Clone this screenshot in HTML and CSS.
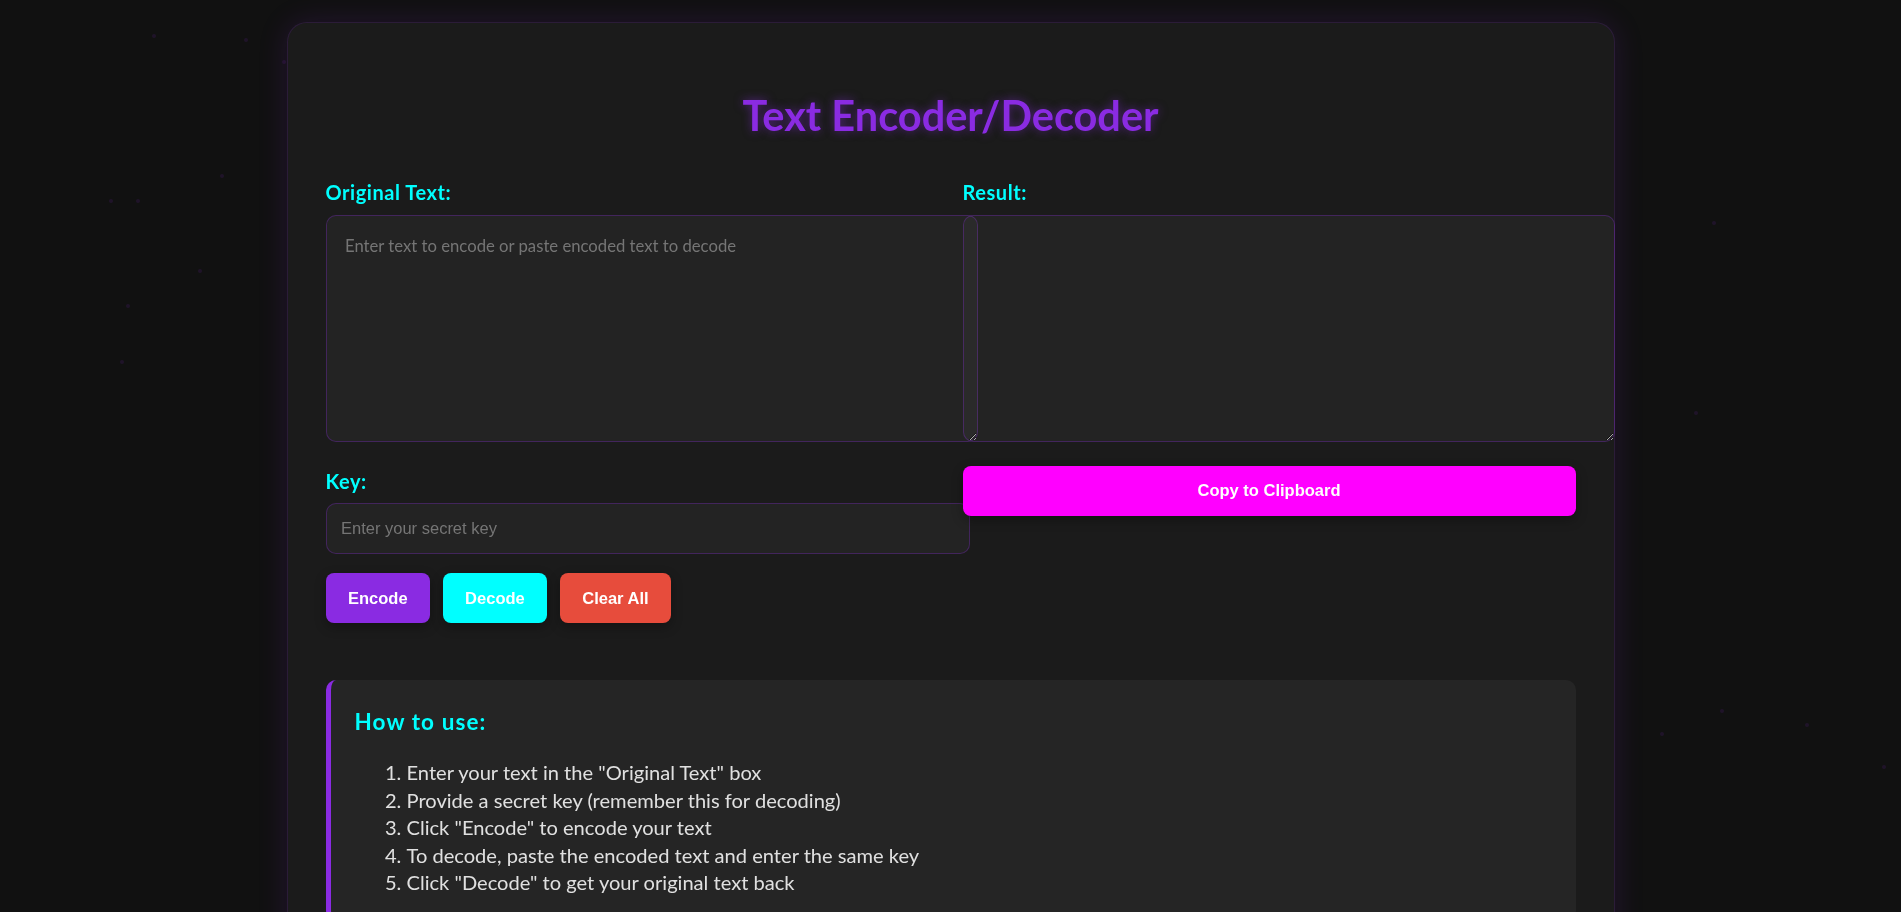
FILE: index.html
```html
<!DOCTYPE html>
<html lang="en">
<head>
    <meta charset="UTF-8">
    <meta name="viewport" content="width=device-width, initial-scale=1.0">
    <title>Text Encoder/Decoder</title>
    <link rel="stylesheet" href="styles.css">
</head>
<body>
    <div class="particles">
        <span></span><span></span><span></span><span></span><span></span>
        <span></span><span></span><span></span><span></span><span></span>
        <span></span><span></span><span></span><span></span><span></span>
    </div>

    <div class="container">
        <h1>Text Encoder/Decoder</h1>

        <div class="grid">
            <div class="col">
                <div class="group">
                    <label for="inputText">Original Text:</label>
                    <textarea id="inputText" placeholder="Enter text to encode or paste encoded text to decode"></textarea>
                </div>
                <div class="group key-group">
                    <label for="key">Key:</label>
                    <input type="text" id="key" placeholder="Enter your secret key">
                </div>
                <div class="buttons">
                    <button class="btn-encode">Encode</button>
                    <button class="btn-decode">Decode</button>
                    <button class="btn-clear">Clear All</button>
                </div>
            </div>
            <div class="col">
                <div class="group">
                    <label for="outputText">Result:</label>
                    <textarea id="outputText" readonly></textarea>
                </div>
                <button class="btn-copy">Copy to Clipboard</button>
            </div>
        </div>

        <div class="instructions">
            <h3>How to use:</h3>
            <ol>
                <li>Enter your text in the "Original Text" box</li>
                <li>Provide a secret key (remember this for decoding)</li>
                <li>Click "Encode" to encode your text</li>
                <li>To decode, paste the encoded text and enter the same key</li>
                <li>Click "Decode" to get your original text back</li>
            </ol>
        </div>
    </div>
</body>
</html>
```

FILE: styles.css
```css
html, body {
    overflow: hidden;
}
body {
    margin: 0;
    min-height: 100vh;
    background: #111111;
    font-family: Lato, "Open Sans", sans-serif;
    color: #e0e0e0;
}
.particles {
    position: fixed;
    inset: 0;
    z-index: 0;
}
.particles span {
    position: absolute;
    width: 4px;
    height: 4px;
    border-radius: 50%;
    background: rgba(138, 43, 226, 0.12);
}
.particles span:nth-child(1) { left: 152px; top: 34px; }
.particles span:nth-child(2) { left: 244px; top: 38px; }
.particles span:nth-child(3) { left: 282px; top: 60px; }
.particles span:nth-child(4) { left: 220px; top: 174px; }
.particles span:nth-child(5) { left: 109px; top: 199px; }
.particles span:nth-child(6) { left: 136px; top: 199px; }
.particles span:nth-child(7) { left: 198px; top: 269px; }
.particles span:nth-child(8) { left: 126px; top: 304px; }
.particles span:nth-child(9) { left: 120px; top: 360px; }
.particles span:nth-child(10) { left: 1712px; top: 221px; }
.particles span:nth-child(11) { left: 1694px; top: 411px; }
.particles span:nth-child(12) { left: 1720px; top: 709px; }
.particles span:nth-child(13) { left: 1660px; top: 732px; }
.particles span:nth-child(14) { left: 1805px; top: 723px; }
.particles span:nth-child(15) { left: 1882px; top: 765px; }

.container {
    position: relative;
    z-index: 1;
    width: 1250px;
    margin: 22px auto 0;
    padding: 38px;
    background: #1b1b1b;
    border: 1px solid rgba(138, 43, 226, 0.15);
    border-radius: 20px;
    box-shadow: 0 0 30px rgba(138, 43, 226, 0.15);
}
h1 {
    margin: 29.5px 0 41.5px;
    font-size: 41.5px;
    line-height: 48px;
    font-weight: 700;
    text-align: center;
    color: #8a2be2;
    text-shadow: 0 0 10px rgba(138, 43, 226, 0.5);
}
.grid {
    display: grid;
    grid-template-columns: 1fr 1fr;
    column-gap: 24px;
    align-items: start;
}
.group label {
    display: block;
    margin-bottom: 10.5px;
    font-size: 20px;
    line-height: 24px;
    letter-spacing: 0.55px;
    font-weight: 700;
    color: #00ffff;
}
textarea {
    display: block;
    width: 100%;
    height: 188px;
    padding: 18.5px;
    border: 1px solid rgba(138, 43, 226, 0.3);
    border-radius: 10px;
    background: rgba(255, 255, 255, 0.035);
    color: #e0e0e0;
    font-family: inherit;
    font-size: 16.7px;
    line-height: 24px;
}
.key-group {
    margin-top: 27px;
}
input {
    display: block;
    width: 100%;
    height: 20px;
    padding: 14.5px;
    border: 1px solid rgba(138, 43, 226, 0.3);
    border-radius: 10px;
    background: rgba(255, 255, 255, 0.035);
    color: #e0e0e0;
    font-family: "Liberation Sans", Arial, sans-serif;
    font-size: 16.5px;
}
.buttons {
    display: flex;
    gap: 12.5px;
    margin-top: 19px;
}
button {
    padding: 15.5px 22.5px;
    border: none;
    border-radius: 8px;
    color: #ffffff;
    font-family: "Liberation Sans", Arial, sans-serif;
    font-size: 16.5px;
    line-height: 19px;
    font-weight: 700;
    box-shadow: 0 4px 12px rgba(0, 0, 0, 0.3);
}
.btn-encode { background: #8a2be2; }
.btn-decode { background: #00ffff; }
.btn-clear { background: #e74c3c; }
.btn-copy {
    display: block;
    width: 100%;
    margin-top: 24px;
    background: #ff00ff;
}
.instructions {
    margin-top: 57px;
    padding: 28px 24px 24px;
    background: #252525;
    border-left: 5px solid #8a2be2;
    border-radius: 10px;
}
.instructions h3 {
    margin: 0 0 23px;
    font-size: 22.5px;
    line-height: 28px;
    letter-spacing: 1.1px;
    color: #00ffff;
}
.instructions ol {
    margin: 0;
    padding-left: 52px;
}
.instructions li {
    font-size: 20.1px;
    line-height: 27.5px;
    color: #e0e0e0;
}
```
